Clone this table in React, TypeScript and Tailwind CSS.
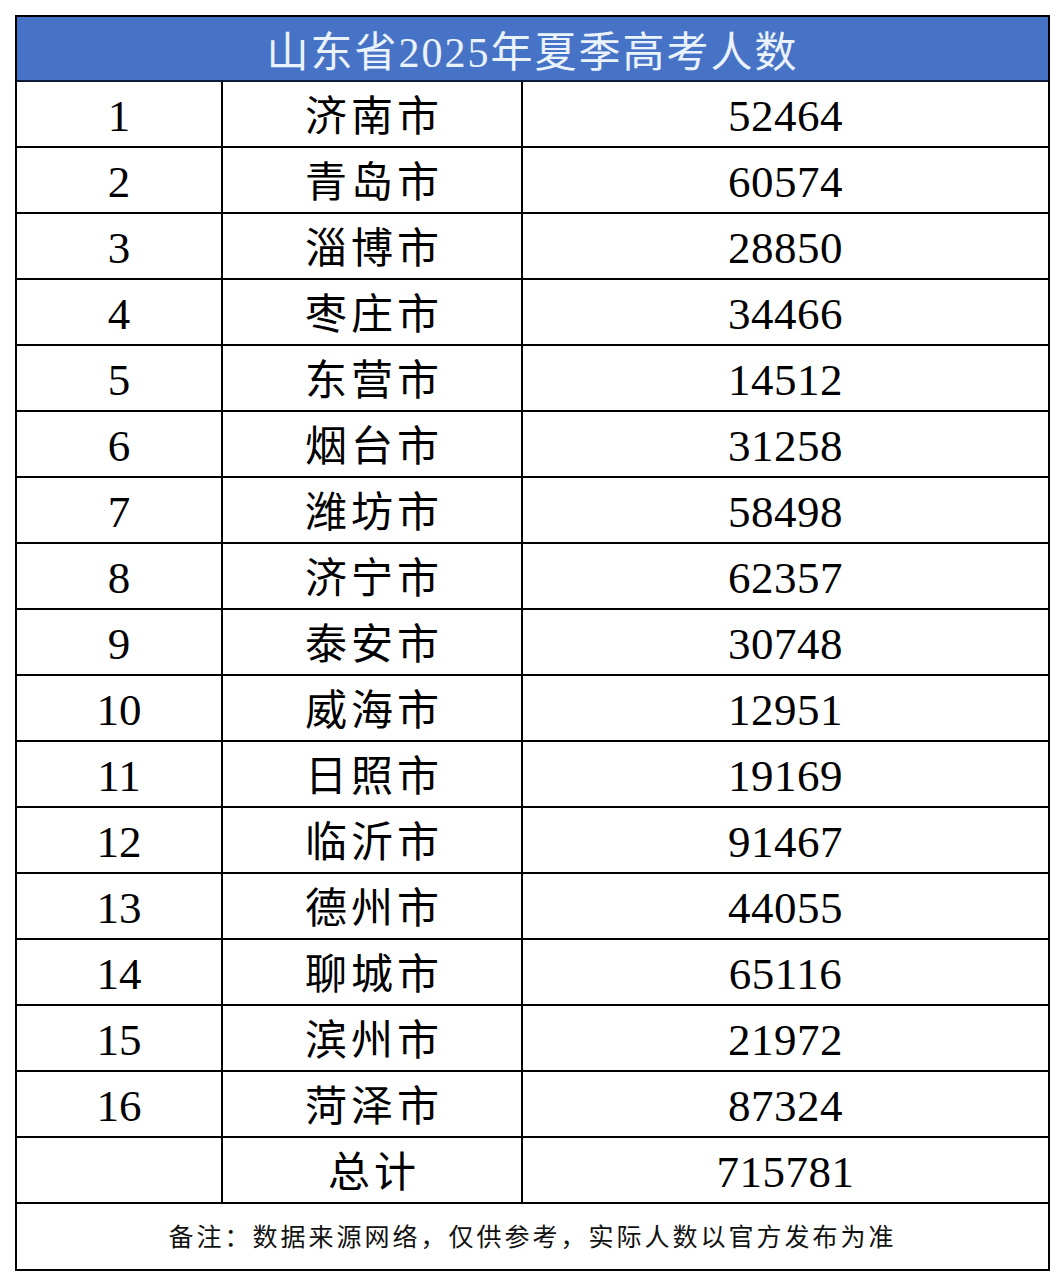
const rows: [number, string, string][] = [
  [1, '济南市', '52464'],
  [2, '青岛市', '60574'],
  [3, '淄博市', '28850'],
  [4, '枣庄市', '34466'],
  [5, '东营市', '14512'],
  [6, '烟台市', '31258'],
  [7, '潍坊市', '58498'],
  [8, '济宁市', '62357'],
  [9, '泰安市', '30748'],
  [10, '威海市', '12951'],
  [11, '日照市', '19169'],
  [12, '临沂市', '91467'],
  [13, '德州市', '44055'],
  [14, '聊城市', '65116'],
  [15, '滨州市', '21972'],
  [16, '菏泽市', '87324'],
];

const font = { fontFamily: '"Liberation Serif", "Noto Sans CJK SC", serif' };

function Row({ no, city, count }: { no: string; city: string; count: string }) {
  return (
    <div className="grid h-[66px] grid-cols-[206px_300px_1fr] border-b-2 border-black text-black">
      <div className="flex items-center justify-center border-r-2 border-black pt-[5px] text-[45px] leading-none">
        {no}
      </div>
      <div className="flex items-center justify-center border-r-2 border-black pt-[5px] pl-[4px] text-[42px] leading-none tracking-[4px]">
        {city}
      </div>
      <div className="flex items-center justify-center pt-[5px] text-[45px] leading-none tracking-[0.5px]">
        {count}
      </div>
    </div>
  );
}

export default function App() {
  return (
    <div className="h-[1286px] w-[1064px] bg-white pl-[15px] pt-[15px]" style={font}>
      <div className="w-[1035px] border-2 border-black">
        {/* 标题 */}
        <div className="flex h-[65px] items-center justify-center border-b-2 border-[#0d1a3a] bg-[#4773c6] pt-[8px] text-[42px] leading-none tracking-[2px] text-[#eaf2fb]">
          山东省2025年夏季高考人数
        </div>

        {rows.map(([no, city, count]) => (
          <Row key={no} no={String(no)} city={city} count={count} />
        ))}

        <Row no="" city="总计" count="715781" />

        {/* 备注 */}
        <div className="flex h-[65px] items-center justify-center pt-[2px] text-[25px] font-normal leading-none tracking-[3px] text-[#111]">
          备注：数据来源网络，仅供参考，实际人数以官方发布为准
        </div>
      </div>
    </div>
  );
}
